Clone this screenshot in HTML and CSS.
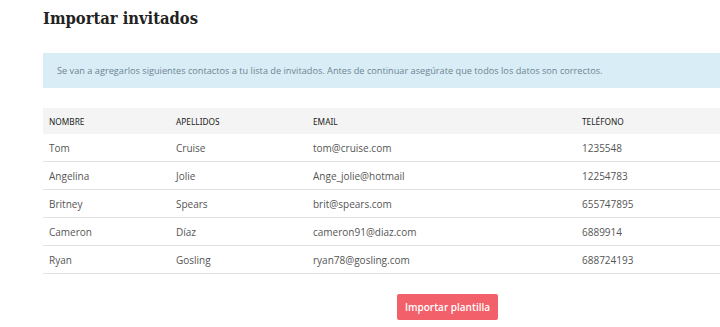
FILE: index.html
```html
<!DOCTYPE html>
<html lang="es">
<head>
    <meta charset="UTF-8">
    <meta name="viewport" content="width=device-width, initial-scale=1.0">
    <title>Importar invitados</title>
    <link rel="stylesheet" href="styles.css">
</head>
<body>
    <div class="import-page">
        <h1>Importar invitados</h1>

        <div class="alert-info">
            Se van a agregarlos siguientes contactos a tu lista de invitados. Antes de continuar asegúrate que todos los datos son correctos.
        </div>

        <table class="guests-table">
            <thead>
                <tr>
                    <th class="col-name">Nombre</th>
                    <th class="col-last">Apellidos</th>
                    <th class="col-email">Email</th>
                    <th class="col-phone">Teléfono</th>
                </tr>
            </thead>
            <tbody>
                <tr>
                    <td>Tom</td>
                    <td>Cruise</td>
                    <td>tom@cruise.com</td>
                    <td>1235548</td>
                </tr>
                <tr>
                    <td>Angelina</td>
                    <td>Jolie</td>
                    <td>Ange_jolie@hotmail</td>
                    <td>12254783</td>
                </tr>
                <tr>
                    <td>Britney</td>
                    <td>Spears</td>
                    <td>brit@spears.com</td>
                    <td>655747895</td>
                </tr>
                <tr>
                    <td>Cameron</td>
                    <td>Díaz</td>
                    <td>cameron91@diaz.com</td>
                    <td>6889914</td>
                </tr>
                <tr>
                    <td>Ryan</td>
                    <td>Gosling</td>
                    <td>ryan78@gosling.com</td>
                    <td>688724193</td>
                </tr>
            </tbody>
        </table>

        <div class="actions">
            <button class="btn-import">Importar plantilla</button>
        </div>
    </div>
</body>
</html>
```

FILE: styles.css
```css
body {
    margin: 0;
    background-color: #fff;
    font-family: "Open Sans", sans-serif;
}

.import-page {
    padding: 0 0 0 43px;
}

h1 {
    font-family: "DejaVu Serif Condensed", "DejaVu Serif", serif;
    font-stretch: condensed;
    font-size: 16.4px;
    font-weight: bold;
    color: #222;
    margin: 0;
    padding-top: 9px;
    height: 44px;
}

.alert-info {
    background-color: #d9edf6;
    color: #6c8593;
    font-size: 9.2px;
    padding: 0 14px;
    height: 35px;
    line-height: 35px;
    white-space: nowrap;
    overflow: hidden;
}

.guests-table {
    width: 100%;
    margin-top: 20px;
    border-collapse: collapse;
    table-layout: fixed;
}

.guests-table th {
    background-color: #f4f4f4;
    font-family: "Noto Sans", sans-serif;
    font-size: 8.3px;
    font-weight: normal;
    color: #222;
    text-transform: uppercase;
    text-align: left;
    height: 26px;
    padding: 0 6px;
}

.guests-table td {
    font-size: 10px;
    color: #555;
    height: 27px;
    padding: 0 6px;
    border-bottom: 1px solid #e2e2e2;
}

.col-name { width: 115px; }
.col-last { width: 125px; }
.col-email { width: 257px; }

.actions {
    padding: 20px 0 0 354px;
}

.btn-import {
    background-color: #f2606a;
    color: #fff;
    border: none;
    border-radius: 2px;
    width: 101px;
    height: 26px;
    font-family: "Open Sans", sans-serif;
    font-size: 10px;
    font-weight: 600;
    cursor: pointer;
}
```
